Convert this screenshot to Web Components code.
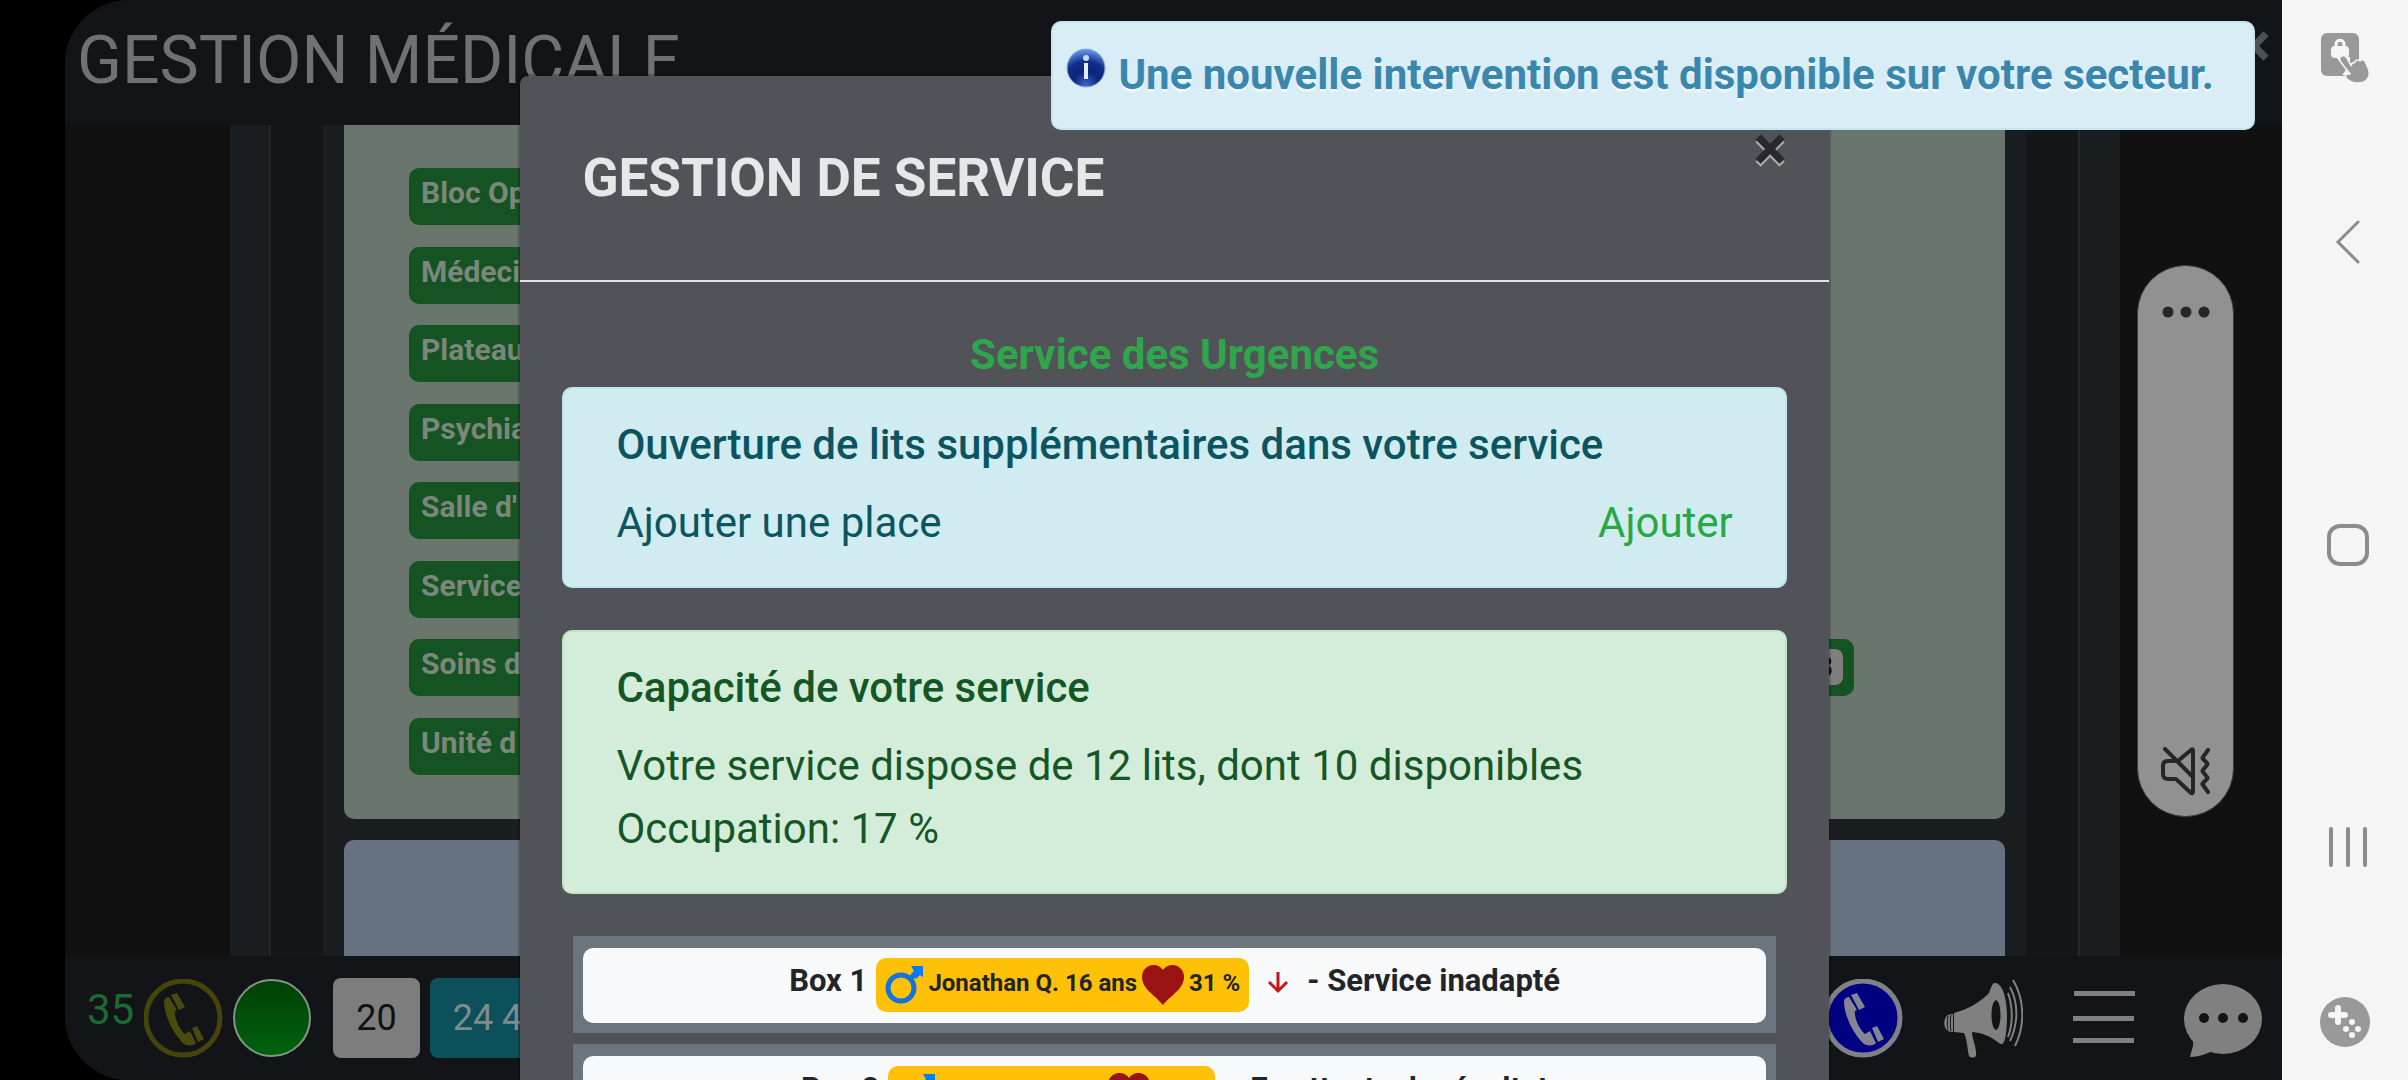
<!DOCTYPE html>
<html lang="fr">
<head>
<meta charset="utf-8">
<title>Gestion médicale</title>
<style>
  html, body {
    height: 100%;
    margin: 0;
    background: #000;
    overflow: hidden;
  }
</style>
</head>
<body>
<phone-screen>
  <game-header slot="app">GESTION MÉDICALE</game-header>
  <hospital-page slot="app"></hospital-page>
  <game-footer slot="app"></game-footer>

  <service-modal slot="over" heading="GESTION DE SERVICE">
    <h4 slot="title">Service des Urgences</h4>
    <alert-card kind="info" heading="Ouverture de lits supplémentaires dans votre service">
      <span>Ajouter une place</span>
      <a slot="action" href="#ajouter">Ajouter</a>
    </alert-card>
    <alert-card kind="success" heading="Capacité de votre service">
      <span>Votre service dispose de 12 lits, dont 10 disponibles<br>Occupation: 17 %</span>
    </alert-card>
    <bed-list slot="beds"></bed-list>
  </service-modal>

  <volume-pill slot="over"></volume-pill>
  <toast-message slot="over">Une nouvelle intervention est disponible sur votre secteur.</toast-message>
  <system-nav slot="nav"></system-nav>
</phone-screen>

<script>
const PHONE = /* svg */`
  <path d="M27 16l6-2 8 14-6 3zM48 49l5-2 7 13-6 3z"/>
  <path d="M20 22c0-2 3-4 5-4l8 13-2 1c-1 6 4 18 10 23l5-3 6 12c-2 3-9 3-12 1C30 56 20 37 20 22z"/>`;

class PhoneScreen extends HTMLElement {
  constructor() {
    super();
    this.attachShadow({ mode: "open" });
  }

  static get styles() {
    return /* css */`
      :host {
        display: flex;
        height: 100vh;
        background: #000;
        font-family: Roboto, "Liberation Sans", sans-serif;
        font-size: 42px;
      }

      .app {
        position: relative;
        flex: 1;
        min-width: 0;
        display: flex;
        flex-direction: column;
        margin-left: 65px;
        border-radius: 64px 0 0 64px;
        background: #111111;
        overflow: hidden;
      }
    `;
  }

  connectedCallback() {
    this.shadowRoot.innerHTML = /* html */`
    <style>${PhoneScreen.styles}</style>
    <div class="app">
      <slot name="app"></slot>
      <slot name="over"></slot>
    </div>
    <slot name="nav"></slot>`;
  }
}

class GameHeader extends HTMLElement {
  constructor() {
    super();
    this.attachShadow({ mode: "open" });
  }

  static get styles() {
    return /* css */`
      :host {
        display: flex;
        justify-content: space-between;
        height: 125px;
        background: #121417;
        padding: 0 11px 0 12px;
      }

      h1 {
        margin: 0;
        padding-top: 25px;
        font-size: 66px;
        line-height: 72px;
        font-weight: 400;
        color: #707173;
      }

      button {
        align-self: flex-start;
        margin-top: 14px;
        padding: 0;
        border: 0;
        background: none;
        font: 700 63px/63px Roboto, sans-serif;
        color: #505050;
      }
    `;
  }

  connectedCallback() {
    this.shadowRoot.innerHTML = /* html */`
    <style>${GameHeader.styles}</style>
    <h1><slot></slot></h1>
    <button type="button" aria-label="Fermer">×</button>`;
  }
}

class HospitalPage extends HTMLElement {
  constructor() {
    super();
    this.attachShadow({ mode: "open" });
    this.services = [
      "Bloc Op", "Médeci", "Plateau", "Psychia",
      "Salle d'", "Service", "Soins d", "Unité d"
    ];
  }

  static get styles() {
    return /* css */`
      :host {
        display: flex;
        flex: 1;
        min-height: 0;
        padding: 0 162px 0 165px;
        overflow: hidden;
      }

      .outer {
        flex: 1;
        display: flex;
        background: #1a1e21;
        padding: 0 40px 0 39px;
      }

      .inner {
        flex: 1;
        background: #141618;
        border: 1px solid #26292b;
        border-width: 0 2px;
        padding: 0 52px;
      }

      .column {
        background: #1a1e21;
        padding: 0 21px;
        height: 100%;
      }

      .services, .next {
        background: #6a756d;
        border-radius: 0 0 10px 10px;
      }

      .services {
        display: flex;
        flex-direction: column;
        justify-content: space-between;
        height: 607px;
        padding: 43px 151px 44px 65px;
      }

      .next {
        margin-top: 21px;
        height: 100%;
        background: #677281;
        border-radius: 10px;
      }

      .service {
        display: flex;
        justify-content: space-between;
        align-items: flex-start;
        padding: 10px 11px 11px 12px;
        height: 36px;
        border-radius: 10px;
        background: #155422;
        color: #7b877c;
        font-size: 30px;
        line-height: 30px;
        font-weight: 700;
      }

      .service.short {
        margin-right: 300px;
      }

      .count {
        background: #7f7f7f;
        color: #111;
        border-radius: 8px;
        padding: 3px 10px;
      }
    `;
  }

  renderService(name) {
    const last = name === "Soins d";
    const count = last ? `<span class="count">3</span>` : "";
    return `<div class="service ${last ? "" : "short"}">${name}${count}</div>`;
  }

  connectedCallback() {
    this.shadowRoot.innerHTML = /* html */`
    <style>${HospitalPage.styles}</style>
    <div class="outer">
      <div class="inner">
        <div class="column">
          <div class="services">${this.services.map((name) => this.renderService(name)).join("")}</div>
          <div class="next"></div>
        </div>
      </div>
    </div>`;
  }
}

class GameFooter extends HTMLElement {
  constructor() {
    super();
    this.attachShadow({ mode: "open" });
  }

  static get styles() {
    return /* css */`
      :host {
        display: flex;
        justify-content: space-between;
        align-items: center;
        box-sizing: border-box;
        height: 124px;
        padding: 0 19px 0 22px;
        background: #121417;
      }

      .group {
        display: flex;
        align-items: center;
        gap: 10px;
      }

      .group.right {
        gap: 41px;
      }

      .timer {
        color: #1c6b30;
        padding-bottom: 18px;
      }

      button {
        padding: 0;
        border: 0;
        background: none;
        font: 400 36px/80px Roboto, sans-serif;
      }

      svg {
        display: block;
        width: 79px;
        height: 79px;
      }

      .level, .money {
        height: 80px;
        border-radius: 8px;
        padding: 0 23px;
      }

      .level {
        margin-left: 11px;
        background: #7d7d7d;
        color: #111;
      }

      .money {
        width: 180px;
        background: #0b505b;
        color: #7f8b8d;
        text-align: left;
      }
    `;
  }

  connectedCallback() {
    this.shadowRoot.innerHTML = /* html */`
    <style>${GameFooter.styles}</style>
    <div class="group">
      <span class="timer">35</span>
      <button type="button" aria-label="Appels">
        <svg viewBox="0 0 79 79" fill="#4a4a0c">
          <circle cx="39" cy="39" r="37" fill="none" stroke="#45450b" stroke-width="5"/>
          ${PHONE}
        </svg>
      </button>
      <button type="button" aria-label="Disponible">
        <svg viewBox="0 0 79 79">
          <defs>
            <linearGradient id="g" x1="0" y1="0" x2="0" y2="1">
              <stop offset="0" stop-color="#004006"/>
              <stop offset="1" stop-color="#00620d"/>
            </linearGradient>
          </defs>
          <circle cx="39" cy="39" r="38" fill="url(#g)" stroke="#81958a" stroke-width="2"/>
        </svg>
      </button>
      <button type="button" class="level">20</button>
      <button type="button" class="money">24 4</button>
    </div>
    <div class="group right">
      <button type="button" aria-label="Téléphone">
        <svg viewBox="0 0 79 79" fill="#848494">
          <circle cx="39" cy="39" r="37" fill="#000080" stroke="#808088" stroke-width="5"/>
          ${PHONE}
        </svg>
      </button>
      <button type="button" aria-label="Annonces">
        <svg viewBox="0 0 79 79" fill="#808080">
          <path fill-rule="evenodd" d="M10 34c13-3 28-12 35-20 2-5 3-10 6-10 8 0 12 17 12 34 0 14-2 27-5 27-5 0-9-10-30-12 0 7 5 16 4 24-2 2-5 2-7 0-2-9-2-17-5-23l-10-1zM52 21c-6 2-6 28 0 30 6-2 6-28 0-30z"/>
          <path d="M1 40c1-4 5-5 8-5v18c-3 0-7-1-8-5-1-3-1-5 0-8z"/>
          <path d="M4 37c-1 4-1 10 0 14M7 36c-1 5-1 11 0 16" stroke="#121417" fill="none"/>
          <path d="M64 14c5 14 5 31 0 44M66 8c9 17 8 37 0 54M69 1c12 20 12 46 2 66" fill="none" stroke="#808080" stroke-width="2"/>
        </svg>
      </button>
      <button type="button" aria-label="Menu">
        <svg viewBox="0 0 79 79" fill="#808080">
          <path d="M10 12h61v5H10zM9 37h61v5H9zM9 59h61v5H9z"/>
        </svg>
      </button>
      <button type="button" aria-label="Messages">
        <svg viewBox="0 0 79 79" fill="#808080">
          <ellipse cx="39" cy="40" rx="39" ry="35"/>
          <path d="M7 58l2 4c1 5-2 11-3 16 8 0 16-3 23-6z"/>
          <g fill="#121417"><circle cx="20" cy="39" r="5"/><circle cx="39" cy="39" r="5"/><circle cx="59" cy="39" r="5"/></g>
        </svg>
      </button>
    </div>`;
  }
}

class ServiceModal extends HTMLElement {
  constructor() {
    super();
    this.attachShadow({ mode: "open" });
  }

  static get styles() {
    return /* css */`
      :host {
        position: absolute;
        top: 74px;
        left: 20.45%;
        right: 20.35%;
        display: block;
        box-sizing: border-box;
        border: 2px solid #0003;
        border-radius: 10px;
        background: #525358;
        background-clip: padding-box;
      }

      header {
        display: flex;
        justify-content: space-between;
        align-items: flex-start;
        height: 204px;
        padding: 0 42px 0 62px;
        border-bottom: 2px solid #dfe1e5;
      }

      h2 {
        margin: 0;
        padding-top: 71px;
        font-size: 53px;
        line-height: 62px;
        font-weight: 700;
        color: #e6e7e9;
      }

      button {
        margin-top: 41px;
        padding: 0;
        border: 0;
        background: none;
        font: 700 63px/63px Roboto, sans-serif;
        color: #29292c;
        text-shadow: 0 3px 0 #a9a9ac;
      }

      .body {
        padding: 41px 42px;
      }

      ::slotted(h4) {
        margin: 0 0 1px;
        font-size: 42px;
        line-height: 63px;
        font-weight: 700;
        color: #2fa64b;
        text-align: center;
      }
    `;
  }

  connectedCallback() {
    this.shadowRoot.innerHTML = /* html */`
    <style>${ServiceModal.styles}</style>
    <header>
      <h2>${this.getAttribute("heading")}</h2>
      <button type="button" aria-label="Fermer">×</button>
    </header>
    <div class="body">
      <slot name="title"></slot>
      <slot></slot>
      <slot name="beds"></slot>
    </div>`;
  }
}

class AlertCard extends HTMLElement {
  constructor() {
    super();
    this.attachShadow({ mode: "open" });
  }

  static get styles() {
    return /* css */`
      :host {
        display: block;
        margin-bottom: 42px;
        padding: 30px 52px 32px;
        border: 2px solid #bee5eb;
        border-radius: 10px;
        background: #d1ecf1;
        color: #0c5460;
      }

      :host([kind="success"]) {
        border-color: #c3e6cb;
        background: #d4edda;
        color: #155724;
      }

      h4 {
        margin: 0 0 21px;
        font-size: 42px;
        line-height: 51px;
        font-weight: 500;
      }

      .content {
        display: flex;
        justify-content: space-between;
        line-height: 63px;
      }

      ::slotted(a) {
        color: #28a745;
        text-decoration: none;
      }
    `;
  }

  connectedCallback() {
    this.shadowRoot.innerHTML = /* html */`
    <style>${AlertCard.styles}</style>
    <h4>${this.getAttribute("heading")}</h4>
    <div class="content">
      <slot></slot>
      <slot name="action"></slot>
    </div>`;
  }
}

class BedList extends HTMLElement {
  constructor() {
    super();
    this.attachShadow({ mode: "open" });
    this.beds = [
      { box: "Box 1", patient: "Jonathan Q. 16 ans", health: "31 %", falling: true, state: "- Service inadapté" },
      { box: "Box 2", patient: "", health: "", falling: false, state: "- En attente de résultat" }
    ];
  }

  static get styles() {
    return /* css */`
      :host {
        display: flex;
        flex-direction: column;
        gap: 11px;
        padding: 0 11px;
      }

      .bed {
        padding: 12px 10px 10px;
        background: #6c757d;
      }

      .row {
        display: flex;
        justify-content: center;
        height: 65px;
        padding-top: 10px;
        border-radius: 10px;
        background: #f8f9fb;
        color: #212529;
        font-size: 31px;
        line-height: 46px;
        font-weight: 700;
      }

      .patient {
        display: flex;
        align-items: center;
        gap: 5px;
        box-sizing: border-box;
        height: 54px;
        margin: 0 15px 0 9px;
        padding: 0 9px;
        border-radius: 10px;
        background: #ffc107;
        font-size: 24px;
      }

      .patient span {
        padding-bottom: 4px;
      }

      .patient span:empty {
        width: 163px;
      }

      .patient span:last-child:empty {
        width: 51px;
      }

      svg {
        flex: none;
      }

      .arrow {
        margin: 12px 18px 0 3px;
      }
    `;
  }

  renderBed({ box, patient, health, falling, state }) {
    const arrow = falling ? /* html */`
      <svg class="arrow" width="22" height="24" viewBox="0 0 22 24" fill="none" stroke="#c4161c" stroke-width="3">
        <path d="M11 2v19M2 12l9 9 9-9"/>
      </svg>` : "";

    return /* html */`
    <div class="bed">
      <div class="row">
        ${box}
        <div class="patient">
          <svg width="38" height="38" viewBox="0 0 38 38" fill="none" stroke="#1074e0" stroke-width="5">
            <circle cx="16" cy="22" r="13"/>
            <path d="M25 13l5-5"/>
            <path d="M26 0h12v11l-3-2-4 4-5-5 3-3z" fill="#007bff" stroke="none"/>
          </svg>
          <span>${patient}</span>
          <svg width="42" height="40" viewBox="0 0 42 40" fill="#9b1212">
            <path d="M21 40C13 30 0 24 0 12 0 0 15-4 21 5c6-9 21-5 21 7 0 12-13 18-21 28z"/>
          </svg>
          <span>${health}</span>
        </div>
        ${arrow}
        ${state}
      </div>
    </div>`;
  }

  connectedCallback() {
    this.shadowRoot.innerHTML = /* html */`
    <style>${BedList.styles}</style>
    ${this.beds.map((bed) => this.renderBed(bed)).join("")}`;
  }
}

class VolumePill extends HTMLElement {
  constructor() {
    super();
    this.attachShadow({ mode: "open" });
  }

  static get styles() {
    return /* css */`
      :host {
        position: absolute;
        top: 265px;
        right: 48px;
        display: flex;
        flex-direction: column;
        justify-content: space-between;
        align-items: center;
        box-sizing: border-box;
        width: 97px;
        height: 552px;
        padding: 34px 0 19px;
        border: 1px solid #3a3a3a;
        border-radius: 49px;
        background: #919191;
      }

      button {
        padding: 0;
        border: 0;
        background: none;
      }

      svg {
        display: block;
      }
    `;
  }

  connectedCallback() {
    this.shadowRoot.innerHTML = /* html */`
    <style>${VolumePill.styles}</style>
    <button type="button" aria-label="Options">
      <svg width="50" height="24" viewBox="0 0 50 24" fill="#262626">
        <circle cx="7" cy="12" r="5.5"/><circle cx="25" cy="12" r="5.5"/><circle cx="43" cy="12" r="5.5"/>
      </svg>
    </button>
    <button type="button" aria-label="Vibreur">
      <svg width="50" height="50" viewBox="0 0 50 50" fill="none" stroke="#262626" stroke-width="4" stroke-linecap="round" stroke-linejoin="round">
        <path d="M16 14H7q-5 0-5 5v8q0 5 5 5h8l15 14q2 1 2-2V4q0-3-2-1L17 14M4 2l28 28"/>
        <path d="M47 3l-5 7q-1 1 0 2l4 4q1 1 0 2l-4 5q-1 1 0 2l4 5q1 1 0 2l-4 4q-1 1 0 2l5 7"/>
      </svg>
    </button>`;
  }
}

class ToastMessage extends HTMLElement {
  constructor() {
    super();
    this.attachShadow({ mode: "open" });
  }

  static get styles() {
    return /* css */`
      :host {
        position: absolute;
        top: 21px;
        right: 27px;
        display: flex;
        align-items: flex-start;
        gap: 12px;
        padding: 20px 39px 22px 13px;
        border: 2px solid #c5e6ee;
        border-radius: 10px;
        background: #d9edf7;
        color: #3a87ad;
        font-size: 42px;
        line-height: 63px;
        font-weight: 700;
        text-shadow: 0 3px 0 #fff9;
        white-space: nowrap;
      }

      svg {
        padding-top: 4px;
      }
    `;
  }

  connectedCallback() {
    this.shadowRoot.innerHTML = /* html */`
    <style>${ToastMessage.styles}</style>
    <svg width="40" height="42" viewBox="0 0 40 42">
      <defs>
        <radialGradient id="b" cx=".5" cy=".95" r=".9">
          <stop offset="0" stop-color="#3a66c4"/>
          <stop offset=".4" stop-color="#0d2479"/>
          <stop offset=".7" stop-color="#102f8c"/>
          <stop offset="1" stop-color="#5d8fe6"/>
        </radialGradient>
      </defs>
      <circle cx="20" cy="21" r="19" fill="url(#b)" stroke="#8fa9dc"/>
      <path d="M20 16v16" stroke="#e4ebfa" stroke-width="4"/>
      <circle cx="20" cy="11" r="3" fill="#c9d8f7"/>
    </svg>
    <slot></slot>`;
  }
}

class SystemNav extends HTMLElement {
  constructor() {
    super();
    this.attachShadow({ mode: "open" });
  }

  static get styles() {
    return /* css */`
      :host {
        display: flex;
        flex-direction: column;
        justify-content: space-between;
        align-items: center;
        box-sizing: border-box;
        width: 126px;
        padding: 28px 0;
        background: #f5f5f5;
      }

      nav {
        flex: 1;
        display: flex;
        flex-direction: column;
        justify-content: space-between;
        padding: 124px 0 115px 6px;
      }

      button {
        padding: 0;
        border: 0;
        background: none;
      }

      svg {
        display: block;
        width: 60px;
        height: 60px;
      }
    `;
  }

  connectedCallback() {
    this.shadowRoot.innerHTML = /* html */`
    <style>${SystemNav.styles}</style>
    <button type="button" aria-label="Verrouillage tactile">
      <svg viewBox="0 0 60 60" fill="#999">
        <rect x="6" y="5" width="38" height="43" rx="6"/>
        <path d="M27 47l4-5-10-13h14v6l10-2v16z" fill="#f5f5f5"/>
        <rect x="16" y="18" width="18" height="12" rx="4" fill="#f5f5f5"/>
        <path d="M21 19v-3c0-5 8-5 8 0v3" fill="none" stroke="#f5f5f5" stroke-width="3"/>
        <path d="M26 33c-2-4 3-6 5-3l5 9 1-2c1-2 3-1 4-3 1-2 3-1 4 0 2-2 4-2 5 1l3 7c2 6-2 12-8 12-5 1-10-1-13-4-2-2 0-4 3-3l1-1z" stroke="#f5f5f5" stroke-width="3" paint-order="stroke"/>
      </svg>
    </button>
    <nav>
      <button type="button" aria-label="Retour">
        <svg viewBox="0 0 60 60" fill="none" stroke="#8c8c8c" stroke-width="3" stroke-linecap="round"><path d="M40 10L20 30l20 20"/></svg>
      </button>
      <button type="button" aria-label="Accueil">
        <svg viewBox="0 0 60 60" fill="none" stroke="#8c8c8c" stroke-width="4"><rect x="11" y="11" width="38" height="38" rx="11"/></svg>
      </button>
      <button type="button" aria-label="Récents">
        <svg viewBox="0 0 60 60" stroke="#8c8c8c" stroke-width="4" stroke-linecap="round"><path d="M13 12v36M30 12v36M47 12v36"/></svg>
      </button>
    </nav>
    <button type="button" aria-label="Jeux">
      <svg viewBox="0 0 60 60">
        <circle cx="30" cy="30" r="25" fill="#999"/>
        <path d="M23 16v14M16 23h14" stroke="#f5f5f5" stroke-width="6" stroke-linecap="round"/>
        <g fill="#f5f5f5"><circle cx="37" cy="30" r="3"/><circle cx="31" cy="37" r="3"/><circle cx="43" cy="37" r="3"/><circle cx="37" cy="43" r="3"/></g>
      </svg>
    </button>`;
  }
}

customElements.define("phone-screen", PhoneScreen);
customElements.define("game-header", GameHeader);
customElements.define("hospital-page", HospitalPage);
customElements.define("game-footer", GameFooter);
customElements.define("service-modal", ServiceModal);
customElements.define("alert-card", AlertCard);
customElements.define("bed-list", BedList);
customElements.define("volume-pill", VolumePill);
customElements.define("toast-message", ToastMessage);
customElements.define("system-nav", SystemNav);
</script>
</body>
</html>
